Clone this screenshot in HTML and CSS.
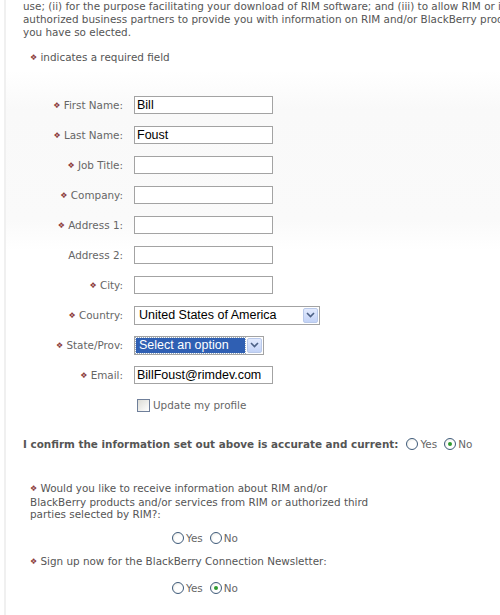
FILE: index.html
```html
<!DOCTYPE html>
<html>
<head>
<meta charset="utf-8">
<link rel="stylesheet" href="styles.css">
</head>
<body>
<div class="page">
  <p class="intro">use; (ii) for the purpose facilitating your download of RIM software; and (iii) to allow RIM or its<br>authorized business partners to provide you with information on RIM and/or BlackBerry products if<br>you have so elected.</p>
  <p class="note"><span class="req">❖</span> indicates a required field</p>

  <div class="form">
    <label class="lbl"><span class="req">❖</span> First Name:</label>
    <div class="field"><span class="input">Bill</span></div>
    <label class="lbl"><span class="req">❖</span> Last Name:</label>
    <div class="field"><span class="input">Foust</span></div>
    <label class="lbl"><span class="req">❖</span> Job Title:</label>
    <div class="field"><span class="input"></span></div>
    <label class="lbl"><span class="req">❖</span> Company:</label>
    <div class="field"><span class="input"></span></div>
    <label class="lbl"><span class="req">❖</span> Address 1:</label>
    <div class="field"><span class="input"></span></div>
    <label class="lbl">Address 2:</label>
    <div class="field"><span class="input"></span></div>
    <label class="lbl"><span class="req">❖</span> City:</label>
    <div class="field"><span class="input"></span></div>
    <label class="lbl"><span class="req">❖</span> Country:</label>
    <div class="field"><span class="select wide"><span class="sel-text">United States of America</span><span class="arrow"><svg width="9" height="6" viewBox="0 0 9 6"><path d="M1 1 L4.5 4.5 L8 1" fill="none" stroke="#4d6185" stroke-width="1.6"/></svg></span></span></div>
    <label class="lbl"><span class="req">❖</span> State/Prov:</label>
    <div class="field"><span class="select narrow"><span class="sel-text hl">Select an option</span><span class="arrow"><svg width="9" height="6" viewBox="0 0 9 6"><path d="M1 1 L4.5 4.5 L8 1" fill="none" stroke="#4d6185" stroke-width="1.6"/></svg></span></span></div>
    <label class="lbl"><span class="req">❖</span> Email:</label>
    <div class="field"><span class="input">BillFoust@rimdev.com</span></div>
    <span class="lbl"></span>
    <div class="field check-row"><span class="checkbox"></span><span>Update my profile</span></div>
  </div>

  <div class="confirm">
    <span class="confirm-text">I confirm the information set out above is accurate and current:</span>
    <span class="radio"></span><span class="rlabel">Yes</span>
    <span class="radio on"></span><span class="rlabel">No</span>
  </div>

  <p class="question"><span class="req">❖</span> Would you like to receive information about RIM and/or BlackBerry products and/or services from RIM or authorized third parties selected by RIM?:</p>
  <div class="choices">
    <span class="radio"></span><span class="rlabel">Yes</span>
    <span class="radio"></span><span class="rlabel">No</span>
  </div>

  <p class="question single"><span class="req">❖</span> Sign up now for the BlackBerry Connection Newsletter:</p>
  <div class="choices last">
    <span class="radio"></span><span class="rlabel">Yes</span>
    <span class="radio on"></span><span class="rlabel">No</span>
  </div>
</div>
</body>
</html>
```
FILE: styles.css
```css
html, body {
  margin: 0;
  padding: 0;
  background: #ffffff;
}
body {
  font-family: "DejaVu Sans", Verdana, sans-serif;
  font-size: 10.4px;
  color: #555555;
  overflow: hidden;
  width: 500px;
  height: 615px;
}
.page {
  margin-left: 4px;
  border-left: 2px solid #f0f0f0;
  padding-left: 17px;
  min-height: 615px;
  box-sizing: border-box;
  overflow: hidden;
  background: linear-gradient(to bottom, #ffffff 0px, #ffffff 70px, #f9f9f9 110px, #fafafa 220px, #ffffff 250px);
}
.intro {
  margin: 0;
  line-height: 13px;
  white-space: nowrap;
}
.req {
  color: #8b3a3a;
  font-size: 8px;
  vertical-align: 1px;
}
.note {
  margin: 12px 0 0 7px;
  line-height: 13px;
}
.form {
  display: grid;
  grid-template-columns: 100px auto;
  grid-auto-rows: 18px;
  column-gap: 11px;
  row-gap: 12px;
  margin-top: 32px;
  align-items: center;
}
.lbl {
  text-align: right;
  color: #666666;
  line-height: 18px;
  height: 18px;
  white-space: nowrap;
}
.field {
  display: flex;
  height: 18px;
  align-items: center;
}
.input {
  display: block;
  box-sizing: border-box;
  width: 139px;
  height: 18px;
  border: 1px solid #a3a3a3;
  background: #fff;
  font-family: "Liberation Sans", Arial, sans-serif;
  font-size: 12.5px;
  color: #000;
  line-height: 16px;
  padding-left: 2px;
}
.select {
  display: flex;
  box-sizing: border-box;
  height: 19px;
  border: 1px solid #a3a3a3;
  background: #fff;
  padding: 1px;
  font-family: "Liberation Sans", Arial, sans-serif;
  font-size: 12.5px;
  color: #000;
}
.select.wide { width: 186px; }
.select.narrow { width: 130px; }
.sel-text {
  flex: 1;
  line-height: 15px;
  padding-left: 3px;
  white-space: nowrap;
  overflow: hidden;
}
.sel-text.hl {
  background: #2f5fb3;
  color: #fff;
  margin: 0 2px 0 0;
  outline: 1px dotted #9ab;
}
.arrow {
  width: 15px;
  height: 15px;
  box-sizing: border-box;
  border: 1px solid #b9c9ea;
  border-radius: 2px;
  background: linear-gradient(to bottom, #e2eafd, #c3d3f7);
  display: flex;
  align-items: center;
  justify-content: center;
}
.check-row {
  padding-left: 3px;
  gap: 3px;
  color: #666;
}
.checkbox {
  width: 13px;
  height: 13px;
  box-sizing: border-box;
  border: 1px solid #6f7f9a;
  background: linear-gradient(135deg, #dcdcd6, #ffffff);
}
.confirm {
  display: flex;
  align-items: center;
  margin-top: 23px;
  height: 14px;
}
.confirm-text {
  font-weight: bold;
  margin-right: 8px;
  color: #555;
}
.radio {
  width: 12px;
  height: 12px;
  box-sizing: border-box;
  border: 1px solid #3e5a7a;
  border-radius: 50%;
  background: radial-gradient(circle at 60% 60%, #ffffff 40%, #e4e4dc 100%);
  display: inline-flex;
  align-items: center;
  justify-content: center;
  margin-right: 2px;
}
.radio.on::after {
  content: "";
  width: 4px;
  height: 4px;
  border-radius: 50%;
  background: #2f9a2f;
}
.rlabel {
  margin-right: 7px;
  color: #666;
}
.question {
  margin: 31px 0 0 7px;
  width: 342px;
  line-height: 12.5px;
}
.question.single {
  margin-top: 10px;
}
.choices {
  display: flex;
  align-items: center;
  margin: 10px 0 0 149px;
  height: 14px;
}
.choices.last {
  margin-top: 13px;
}
```
